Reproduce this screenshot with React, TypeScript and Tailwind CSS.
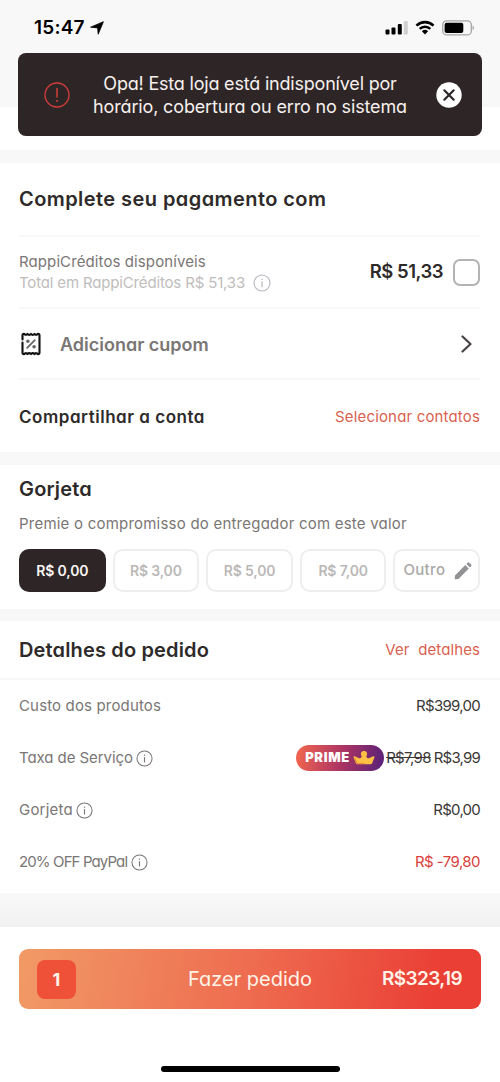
import type { ReactNode } from "react";

function InfoIcon({ className }: { className: string }) {
  return (
    <svg viewBox="0 0 18 18" fill="none" stroke="currentColor" className={className}>
      <circle cx="9" cy="9" r="8" strokeWidth="1.100" />
      <path d="M9 7.600V13.200" strokeWidth="1.200" />
      <path d="M9 4.800v1.300" strokeWidth="1.300" />
    </svg>
  );
}

function StatusBar() {
  return (
    <div className="flex h-[53px] items-start justify-between pl-[34px] pr-[25px] pt-[18px]">
      <div className="flex h-5 items-center gap-[5px] text-black">
        <span className="text-[19px] font-semibold leading-5 tracking-[0.2px]">15:47</span>
        <svg viewBox="0 0 14 14" className="size-[14px]" fill="#000">
          <path d="M13.400.700 8.200 13.200 7.600 6.900.600 6.200z" stroke="#000" strokeWidth=".8" strokeLinejoin="round" />
        </svg>
      </div>
      <div className="flex h-5 items-center pb-px">
        <svg viewBox="0 0 23 15" className="h-[15px] w-[23px]">
          <rect x="0.500" y="9.500" width="4" height="5" rx="1" />
          <rect x="6.500" y="7.500" width="4" height="7" rx="1" />
          <rect x="12.800" y="4" width="4" height="10.500" rx="1" />
          <rect x="18.800" y="1" width="4" height="13.500" rx="1" fill="#cfcfcf" />
        </svg>
        <svg viewBox="0 0 20 15" className="ml-[7px] h-[15px] w-5" fill="none" stroke="#000">
          <path d="M1.500 5.600a12.200 12.200 0 0 1 17 0" strokeWidth="2.700" />
          <path d="M4.700 8.900a7.600 7.600 0 0 1 10.600 0" strokeWidth="2.500" />
          <path d="M10 14.400 6.900 11.300a4.500 4.500 0 0 1 6.200 0z" fill="#000" stroke="none" />
        </svg>
        <svg viewBox="0 0 33 16" className="ml-[7px] h-4 w-[33px]">
          <rect x=".7" y=".9" width="28.600" height="14" rx="4" fill="none" stroke="#a5a5a5" strokeWidth="1.300" />
          <rect x="2.600" y="2.800" width="18.700" height="10.300" rx="2" />
          <path d="M30.600 5.600c1.800.7 1.800 4 0 4.700z" fill="#a5a5a5" />
        </svg>
      </div>
    </div>
  );
}

function Banner() {
  return (
    <div className="mx-[18px] flex h-[83px] items-center rounded-[8px] bg-[#2e2626] pl-[26px] pr-5">
      <svg viewBox="0 0 26 26" className="size-[26px] shrink-0" fill="none" stroke="#d53c3c">
        <circle cx="13" cy="13" r="12" strokeWidth="1.300" />
        <path d="M13 6v9.500" strokeWidth="1.500" />
        <path d="M13 18v1.800" strokeWidth="1.700" />
      </svg>
      <div className="flex flex-1 flex-col items-center whitespace-nowrap pr-[6px] pt-px text-[18px] leading-[23px] text-[#f7f0ee]">
        <span className="tracking-[-0.2px]">Opa! Esta loja está indisponível por</span>
        <span className="tracking-[-0.15px]">horário, cobertura ou erro no sistema</span>
      </div>
      <svg viewBox="0 0 26 26" className="size-[26px] shrink-0">
        <circle cx="13" cy="13" r="12.700" fill="#fff" />
        <path d="m8.300 8.300 9.400 9.400m0-9.400-9.400 9.400" stroke="#2e2626" strokeWidth="2.200" strokeLinecap="round" />
      </svg>
    </div>
  );
}

function CouponIcon() {
  return (
    <svg viewBox="0 0 20 24" className="h-6 w-5" fill="none" stroke="#111" strokeWidth="2.100" strokeLinejoin="round" strokeLinecap="round">
      <path d="M1.500 7.500V3.500Q1.500 1.800 3 1.800Q4.700 3.800 6.400 1.900Q8.200 3.800 10 1.900Q11.800 3.800 13.600 1.900Q15.300 3.800 17 1.800Q18.500 1.800 18.500 3.500V20.500Q18.500 22.200 17 22.200Q15.300 20.200 13.600 22.100Q11.800 20.200 10 22.100Q8.200 20.200 6.400 22.100Q4.700 20.200 3 22.200Q1.500 22.200 1.500 20.500V10.500" />
      <g stroke="#6a6665" strokeWidth="1.800">
        <path d="m6.200 15.800 7.600-7.600" />
        <circle cx="6.900" cy="9.200" r=".9" />
        <circle cx="13.100" cy="14.800" r=".9" />
      </g>
    </svg>
  );
}

const tips = ["R$ 0,00", "R$ 3,00", "R$ 5,00", "R$ 7,00"];

function Tips() {
  return (
    <section className="h-36 bg-white pl-[19px] pr-5 pt-3">
      <h2 className="text-[20px] font-semibold leading-6 tracking-[0.15px] text-[#2e2a29]">Gorjeta</h2>
      <p className="mt-[11px] whitespace-nowrap text-[15px] leading-6 tracking-[0.22px] text-[#7a7675]">
        Premie o compromisso do entregador com este valor
      </p>
      <div className="mt-[13px] grid grid-cols-5 gap-[7px] text-[14px] font-semibold tracking-[-0.17px]">
        {tips.map((tip, i) => (
          <button
            key={tip}
            className={
              i === 0
                ? "h-[43px] rounded-[10px] bg-[#2e2626] text-[#fbf5f3]"
                : "h-[43px] rounded-[10px] border-2 border-[#efeeec] text-[#bbb9b8]"
            }
          >
            {tip}
          </button>
        ))}
        <button className="flex h-[43px] items-center justify-between rounded-[10px] border-2 border-[#efeeec] pl-2 pr-[6px] text-[15px] font-medium tracking-[0.35px] text-[#aaa8a7]">
          Outro
          <svg viewBox="0 0 18 18" className="size-[18px]" fill="#929196">
            <path d="M1 13.400 11.300 3.100l3.500 3.500L4.500 16.900 1.600 17.300Q.6 17.400.7 16.400zM12.400 2l1.300-1.300q.8-.7 1.600 0l1.900 1.900q.7.800 0 1.600l-1.300 1.300z" />
          </svg>
        </button>
      </div>
    </section>
  );
}

function Row({ label, info, children }: { label: ReactNode; info?: boolean; children: ReactNode }) {
  return (
    <div className="flex h-[52px] items-center justify-between whitespace-nowrap pl-[19px] pr-5 text-[15px] text-[#3b3736]">
      <div className="flex items-center gap-[3.500px] text-[#7a7675]">
        {label}
        {info && <InfoIcon className="size-[17px]" />}
      </div>
      <div className="flex items-center">{children}</div>
    </div>
  );
}

function PrimeBadge() {
  return (
    <div className="mr-[2px] flex h-[26px] w-[88px] items-center rounded-full bg-[linear-gradient(100deg,#ee6450_4%,#ac3463_52%,#5d2278_96%)] pl-[9px]">
      <span className="text-[13px] font-black tracking-[0.7px] text-white">PRIME</span>
      <svg viewBox="0 0 22 14" className="ml-[3px] h-[14px] w-[22px]">
        <path
          d="M.6 6.400Q.3 5 1.700 5.200L5.600 7Q7.600 7.800 8.300 6.200Q9 5.200 8.200 4.300A3.100 3.100 0 1 1 13.800 4.300Q13 5.200 13.700 6.200Q14.400 7.800 16.400 7L20.300 5.200Q21.700 5 21.400 6.400L19.200 11.900Q18.700 13.300 17.300 13.300H4.700Q3.300 13.300 2.800 11.900z"
          fill="#fcc044"
        />
        <path d="m1.500 7 2 4.500q.5 1 1.600 1h6.500" fill="none" stroke="#ee8b3b" strokeWidth="1.200" />
      </svg>
    </div>
  );
}

export default function App() {
  return (
    <div className="flex h-[1082px] w-[500px] flex-col overflow-hidden bg-[#f8f8f8] font-['Inter','Liberation_Sans',sans-serif] [font-feature-settings:'cv11']">
      <header className="h-[150px] shrink-0 bg-[linear-gradient(#f8f8f8_107px,#ffffff_107px)]">
        <StatusBar />
        <Banner />
      </header>

      <section className="mt-[13px] h-[289px] bg-white pl-[19px] pr-5">
        <h2 className="flex h-[74px] items-center whitespace-nowrap border-b-2 border-[#f7f7f7] text-[20px] font-semibold tracking-[0.43px] text-[#2e2a29]">
          Complete seu pagamento com
        </h2>
        <div className="flex h-[72px] items-center justify-between whitespace-nowrap border-b-2 border-[#f7f7f7]">
          <div className="text-[15px] leading-[21px]">
            <p className="tracking-[0.1px] text-[#7a7675]">RappiCréditos disponíveis</p>
            <p className="flex items-center text-[#bfbdbc]">
              <span className="tracking-[-0.16px]">Total em RappiCréditos R$ 51,33</span>
              <InfoIcon className="ml-2 size-[18px] text-[#b3b6bd]" />
            </p>
          </div>
          <div className="flex items-center gap-[10px]">
            <span className="text-[18.5px] font-semibold tracking-[-0.5px] text-[#2e2a29]">R$ 51,33</span>
            <span className="size-[27px] rounded-[7px] border-2 border-[#b4b3b2]" />
          </div>
        </div>
        <div className="flex h-[71px] items-center whitespace-nowrap border-b-2 border-[#f7f7f7] pl-[2px] pr-2">
          <CouponIcon />
          <span className="ml-[19px] flex-1 pt-px text-[18px] font-semibold text-[#7a7675]">Adicionar cupom</span>
          <svg viewBox="0 0 11 18" className="h-[18px] w-[11px]" fill="none" stroke="#474343" strokeWidth="2.200" strokeLinecap="round" strokeLinejoin="round">
            <path d="m1.500 1.500 8 7.500-8 7.500" />
          </svg>
        </div>
        <div className="flex h-[73px] items-center justify-between whitespace-nowrap pt-[2px]">
          <h3 className="text-[17px] font-semibold tracking-[0.53px] text-[#2e2a29]">Compartilhar a conta</h3>
          <a className="text-[15px] tracking-[0.16px] text-[#d95f4f]">Selecionar contatos</a>
        </div>
      </section>

      <div className="mt-[13px]">
        <Tips />
      </div>

      <section className="mt-3 h-[272px] bg-white">
        <div className="flex h-[59px] items-center justify-between whitespace-pre border-b-2 border-[#f7f7f7] pl-[19px] pr-5">
          <h2 className="text-[20px] font-semibold tracking-[0.15px] text-[#2e2a29]">Detalhes do pedido</h2>
          <a className="pt-[2px] text-[15px] tracking-[0.1px] text-[#d95f4f]">{"Ver  detalhes"}</a>
        </div>
        <Row label={<span className="tracking-[0.15px]">Custo dos produtos</span>}>
          <span className="tracking-[-0.71px]">R$399,00</span>
        </Row>
        <Row label={<span className="tracking-[-0.07px]">Taxa de Serviço</span>} info>
          <PrimeBadge />
          <span className="tracking-[-0.68px] line-through">R$7,98</span>
          <span className="ml-[3px] tracking-[-0.8px]">R$3,99</span>
        </Row>
        <Row label={<span className="tracking-[0.2px]">Gorjeta</span>} info>
          <span className="tracking-[-0.75px]">R$0,00</span>
        </Row>
        <Row label={<span className="tracking-[-0.88px]">20% OFF PayPal</span>} info>
          <span className="tracking-[-0.56px] text-[#d8403b]">R$ -79,80</span>
        </Row>
      </section>

      <div className="h-[34px] shrink-0 bg-gradient-to-b from-[#f9f9f9] to-[#f1f1f1]" />

      <footer className="flex flex-1 flex-col items-center bg-white pt-[22px]">
        <button className="grid h-[60px] w-[462px] grid-cols-[1fr_auto_1fr] items-center rounded-[9px] bg-[linear-gradient(100deg,#f19a66_0%,#ee6c50_50%,#ea3f35_90%)] pl-[18px] pr-[18px] text-[#fff3e8]">
          <span className="flex size-[39px] items-center justify-center rounded-[8px] bg-[#ef5138] text-[18px] font-bold">1</span>
          <span className="text-[20px]">Fazer pedido</span>
          <span className="pr-px pt-px text-right text-[19px] font-semibold tracking-[-0.6px]">R$323,19</span>
        </button>
        <div className="mt-[57px] h-[6px] w-[179px] rounded-full bg-black" />
      </footer>
    </div>
  );
}
